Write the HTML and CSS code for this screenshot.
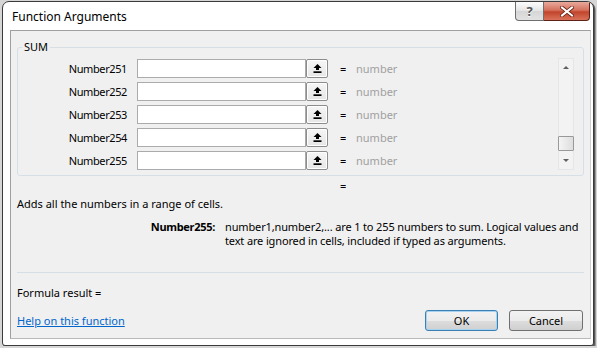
FILE: index.html
```html
<!DOCTYPE html>
<html lang="en">
<head>
  <meta charset="UTF-8">
  <meta name="viewport" content="width=device-width, initial-scale=1.0">
  <title>Function Arguments</title>
  <link rel="stylesheet" href="styles.css">
</head>
<body>
  <div class="window">
    <div class="titlebar">
      <span class="title">Function Arguments</span>
      <div class="caption">
        <button class="cap help">?</button>
        <button class="cap close">
          <svg width="14" height="11" viewBox="0 0 14 11">
            <path d="M2 1.5 L12 9.5 M12 1.5 L2 9.5" stroke="#6b2318" stroke-width="3.6" stroke-linecap="square"/>
            <path d="M2 1.5 L12 9.5 M12 1.5 L2 9.5" stroke="#fff" stroke-width="2" stroke-linecap="square"/>
          </svg>
        </button>
      </div>
    </div>

    <div class="frame">
      <div class="panel">
        <fieldset class="group">
          <legend>SUM</legend>
          <div class="args">
            <div class="rows">
              <div class="row">
                <label>Number251</label>
                <input type="text">
                <button class="pick"><svg width="9" height="9" viewBox="0 0 9 9"><path d="M4.5 0 L8.5 4 L6 4 L6 6 L3 6 L3 4 L0.5 4 Z" fill="#000"/><rect x="0.5" y="7.3" width="8" height="1.7" fill="#000"/></svg></button>
                <span class="eq">=</span>
                <span class="val">number</span>
              </div>
              <div class="row">
                <label>Number252</label>
                <input type="text">
                <button class="pick"><svg width="9" height="9" viewBox="0 0 9 9"><path d="M4.5 0 L8.5 4 L6 4 L6 6 L3 6 L3 4 L0.5 4 Z" fill="#000"/><rect x="0.5" y="7.3" width="8" height="1.7" fill="#000"/></svg></button>
                <span class="eq">=</span>
                <span class="val">number</span>
              </div>
              <div class="row">
                <label>Number253</label>
                <input type="text">
                <button class="pick"><svg width="9" height="9" viewBox="0 0 9 9"><path d="M4.5 0 L8.5 4 L6 4 L6 6 L3 6 L3 4 L0.5 4 Z" fill="#000"/><rect x="0.5" y="7.3" width="8" height="1.7" fill="#000"/></svg></button>
                <span class="eq">=</span>
                <span class="val">number</span>
              </div>
              <div class="row">
                <label>Number254</label>
                <input type="text">
                <button class="pick"><svg width="9" height="9" viewBox="0 0 9 9"><path d="M4.5 0 L8.5 4 L6 4 L6 6 L3 6 L3 4 L0.5 4 Z" fill="#000"/><rect x="0.5" y="7.3" width="8" height="1.7" fill="#000"/></svg></button>
                <span class="eq">=</span>
                <span class="val">number</span>
              </div>
              <div class="row">
                <label>Number255</label>
                <input type="text">
                <button class="pick"><svg width="9" height="9" viewBox="0 0 9 9"><path d="M4.5 0 L8.5 4 L6 4 L6 6 L3 6 L3 4 L0.5 4 Z" fill="#000"/><rect x="0.5" y="7.3" width="8" height="1.7" fill="#000"/></svg></button>
                <span class="eq">=</span>
                <span class="val">number</span>
              </div>
            </div>
            <div class="scrollbar">
              <div class="sb-btn"><span class="tri up"></span></div>
              <div class="sb-track"><div class="thumb"></div></div>
              <div class="sb-btn"><span class="tri down"></span></div>
            </div>
          </div>
        </fieldset>

        <div class="total">=</div>
        <p class="desc">Adds all the numbers in a range of cells.</p>
        <div class="argdesc">
          <b>Number255:</b>
          <span>number1,number2,... are 1 to 255 numbers to sum. Logical values and<br>text are ignored in cells, included if typed as arguments.</span>
        </div>

        <hr class="sep">
        <div class="formula">Formula result =</div>

        <div class="footer">
          <a href="#" class="help-link">Help on this function</a>
          <div class="btns">
            <button class="btn ok">OK</button>
            <button class="btn">Cancel</button>
          </div>
        </div>
      </div>
    </div>
  </div>
</body>
</html>
```

FILE: styles.css
```css
/* Excel style "Function Arguments" dialog */
* {
  box-sizing: border-box;
}
body {
  margin: 0;
  background: #d6d6d6;
  font-family: 'Noto Sans', sans-serif;
  font-size: 11px;
  color: #000;
}
.window {
  width: 592px;
  height: 345px;
  margin: 1px 0 0 2px;
  background: #fff;
  border: 1px solid #3b3b3b;
  border-radius: 7px 7px 3px 3px;
  box-shadow: 1px 1px 0 #555, 2px 2px 0 #999;
  display: flex;
  flex-direction: column;
  overflow: hidden;
}
.titlebar {
  height: 28px;
  display: flex;
  justify-content: space-between;
  align-items: flex-start;
  padding: 0 3px 0 9px;
}
.title {
  font-size: 12px;
  line-height: 29px;
}
.caption {
  display: flex;
}
.cap {
  height: 19px;
  border: 1px solid #6f6f6f;
  border-top: none;
  padding: 0;
  display: flex;
  align-items: center;
  justify-content: center;
  font-family: 'Noto Sans', sans-serif;
}
.help {
  width: 29px;
  border-radius: 0 0 0 4px;
  background: linear-gradient(#fdfdfd, #e4e4e4 50%, #d6d6d6 51%, #e2e2e2);
  color: #555;
  font-size: 13px;
  font-weight: bold;
  text-shadow: 0 1px 0 #fff;
}
.close {
  width: 46px;
  border-left: none;
  border-color: #5e2117;
  border-radius: 0 0 4px 0;
  background: linear-gradient(#e9a99c, #d5735f 45%, #c2452c 55%, #d9725a);
}
.frame {
  flex: 1;
  display: flex;
  padding: 0 2px 6px 7px;
}
.panel {
  flex: 1;
  min-width: 0;
  background: #f0f0f0;
  border: 1px solid;
  border-color: #a0a0a0 #cfcfcf #b8b8b8 #a0a0a0;
  padding: 9px 6px 0 6px;
  display: flex;
  flex-direction: column;
}
.group {
  margin: 0;
  padding: 0 0 5px 0;
  border: 1px solid #d5dfe5;
  border-radius: 3px;
  min-width: 0;
}
.group legend {
  margin-left: 4px;
  padding: 0 2px;
  line-height: 14px;
}
.args {
  display: flex;
  padding-top: 5px;
}
.rows {
  display: flex;
  flex-direction: column;
  gap: 4px;
}
.row {
  display: flex;
  align-items: center;
  height: 19px;
}
.row label {
  width: 109px;
  margin-right: 10px;
  text-align: right;
  letter-spacing: -0.4px;
}
.row input {
  width: 169px;
  height: 19px;
  margin: 0;
  border: 1px solid #ababab;
  background: #fff;
}
.pick {
  width: 22px;
  height: 19px;
  padding: 0;
  border: 1px solid #8c8c8c;
  border-radius: 2px;
  box-shadow: inset 0 0 0 1px #fff;
  background: linear-gradient(#f6f6f6, #e6e6e6);
  display: flex;
  align-items: center;
  justify-content: center;
}
.eq {
  width: 16px;
  margin-left: 12px;
}
.val {
  color: #a0a0a0;
}
.scrollbar {
  width: 16px;
  height: 112px;
  margin: -1px 9px 0 auto;
  border: 1px solid #e6e6e6;
  background: #f3f3f3;
  display: flex;
  flex-direction: column;
}
.sb-btn {
  height: 17px;
  display: flex;
  align-items: center;
  justify-content: center;
}
.sb-track {
  flex: 1;
  display: flex;
  flex-direction: column;
  justify-content: flex-end;
}
.thumb {
  height: 15px;
  margin: 0 -1px 1px;
  border: 1px solid #999;
  border-radius: 1px;
  background: linear-gradient(90deg, #f4f4f4, #dedede);
}
.tri {
  width: 0;
  height: 0;
  border-left: 3px solid transparent;
  border-right: 3px solid transparent;
}
.tri.up {
  border-bottom: 3px solid #606060;
}
.tri.down {
  border-top: 3px solid #606060;
}
.total {
  margin: 3px 0 0 323px;
  line-height: 14px;
}
.desc {
  margin: 4px 0 0;
  line-height: 14px;
}
.argdesc {
  display: flex;
  margin-top: 9px;
  line-height: 14px;
}
.argdesc b {
  width: 198px;
  margin-right: 10px;
  text-align: right;
  flex-shrink: 0;
  letter-spacing: -0.3px;
}
.argdesc span {
  white-space: nowrap;
  letter-spacing: -0.14px;
}
.sep {
  margin: 24px 0 0;
  border: none;
  border-top: 1px solid #d5dfe5;
}
.formula {
  margin-top: 13px;
  line-height: 14px;
}
.footer {
  display: flex;
  justify-content: space-between;
  align-items: center;
  margin-top: 10px;
}
.help-link {
  color: #0066cc;
  text-decoration: underline;
}
.btns {
  display: flex;
  gap: 11px;
  margin-right: 1px;
}
.btn {
  width: 74px;
  height: 21px;
  padding: 0;
  border: 1px solid #707070;
  border-radius: 3px;
  background: linear-gradient(#f2f2f2, #ebebeb 50%, #dddddd 51%, #cfcfcf);
  font-family: 'Noto Sans', sans-serif;
  font-size: 11px;
  color: #000;
}
.btn.ok {
  width: 73px;
  border-color: #3c7fb1;
  box-shadow: inset 0 0 0 1px #a7d3f3;
}
```
